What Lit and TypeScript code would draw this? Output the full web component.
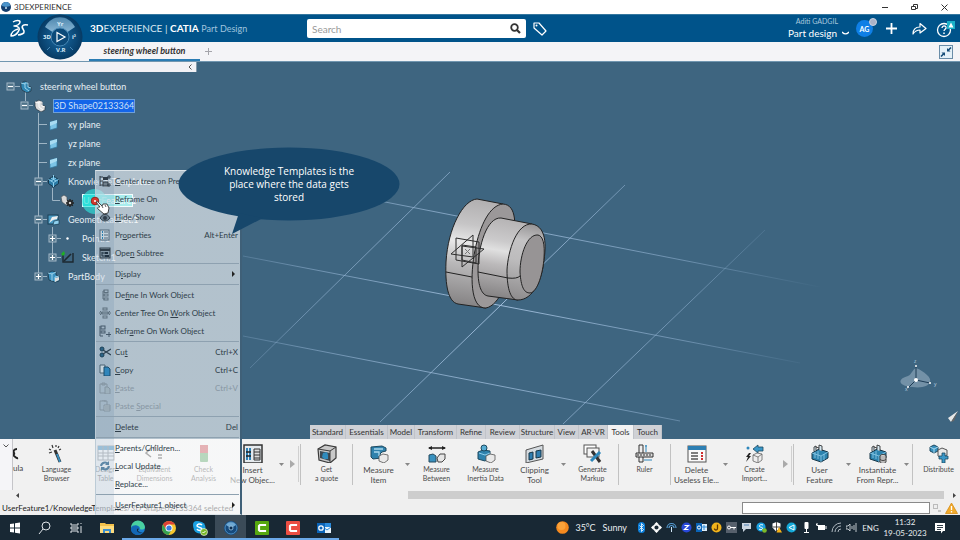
import { LitElement, html, svg, css, nothing, TemplateResult } from "lit";
import { customElement } from "lit/decorators.js";
import { classMap } from "lit/directives/class-map.js";

type Art = TemplateResult;
const icon = (w: number, h: number, art: unknown) =>
  html`<svg width=${w} height=${h} viewBox="0 0 ${w} ${h}" aria-hidden="true">${art}</svg>`;

/* ---------- model tree ---------- */
const partArt = (a: string, b: string) => svg`<path d="M2 3l4-2 3 2v3l3 1v4l-4 2-5-3-1-3z" fill=${a} stroke="#25343f" stroke-width=".7"/><path d="M6 3l3 0v4l3 1M6 3v5l4 3M2 3l4 1" fill="none" stroke=${b} stroke-width=".9"/>`;
const planeArt = svg`<path d="M3 4l7-2v8l-7 2z" fill="#7cc4e6" stroke="#32789d" stroke-width=".7"/><path d="M3 4l7-2v3l-7 3z" fill="#a9dcf2"/>`;
const treeArt: Record<string, Art> = {
  product: partArt("#2f86b3", "#a7dcf3"),
  shape: partArt("#dcdcdc", "#fff"),
  plane: planeArt,
  know: svg`<path d="M6.500 1l5 3.500v4l-5 3.500-5-3.500v-4z" fill="#2b7ba6" stroke="#15354a"/><path d="M1.500 4.500l5 3 5-3M6.500 7.500v4.500M4 3l5 3M9 3l-5 3M6.500 0v4" stroke="#8fd0ee" fill="none"/>`,
  feature: svg`<path d="M0 3l3-2 3 2v3l2 1v3l-3 1-4-3z" fill="#d8d8d8" stroke="#46525a" stroke-width=".7"/><path d="M9 5v8M5 9h8M6.200 6.200l5.600 5.600M11.800 6.200l-5.600 5.600" stroke="#222" stroke-width="1.400"/><circle cx="9" cy="9" r="2" fill="#c9c9c9" stroke="#222" stroke-width="1.400"/>`,
  geo: svg`<rect x="1" y="2" width="10" height="9" fill="#4b9bc4" stroke="#1a4056"/><path d="M2 10l3-6 6-1-1 3-4 1z" fill="#eee"/><path d="M6 12l1-4 5-1v4z" fill="#8fd0ee" stroke="#1a4056" stroke-width=".7"/>`,
  point: svg`<circle cx="6.500" cy="6.500" r="1.200" fill="#fff"/>`,
  sketch: svg`<path d="M2 2v9h10V2" fill="none" stroke="#1d2830" stroke-width="1.400"/><path d="M3 10l7-7" stroke="#1d2830" stroke-width="1.600"/><path d="M0 3l3-3 1 3-2 2z" fill="#1fb024"/>`,
  body: svg`<path d="M1 3l4-2 4 1v3l3 1v5l-4 1-6-2z" fill="#3b92c1" stroke="#18384b" stroke-width=".8"/><path d="M1 3l4 1 4-2M5 4v7M8 7l4-1M8 7v5" stroke="#b5e2f5" stroke-width=".8" fill="none"/><path d="M8 8l4-1v3l-4 2z" fill="#ddd"/>`,
};
const tree: [number, string, string, string, string?][] = [
  [0, "-", "product", "steering wheel button"],
  [1, "-", "shape", "3D Shape02133364", "renaming"],
  [2, "", "plane", "xy plane"],
  [2, "", "plane", "yz plane"],
  [2, "", "plane", "zx plane"],
  [2, "-", "know", "KnowledgeTemplates"],
  [3, "", "feature", "UserFeature1", "selected"],
  [2, "-", "geo", "Geometrical Set.1"],
  [3, "+", "point", "Point.1"],
  [3, "+", "sketch", "Sketch.1"],
  [2, "+", "body", "PartBody"],
];

/* ---------- context menu ---------- */
const ink = "#2f3d49";
const menuArt: Record<string, Art> = {
  center: svg`<path d="M1 1v10M1 2h3M1 6h3M1 10h3" stroke=${ink}/><rect x="4" y="2" width="5" height="3" fill=${ink}/><rect x="4" y="7" width="5" height="4" fill="#71808c" stroke=${ink}/><path d="M10 0v4M8 2h4M10 8v4M8 10h4" stroke=${ink}/>`,
  hide: svg`<path d="M1 7c3-5 7-5 10 0-3 4-7 4-10 0z" fill="#6c7f8e" stroke=${ink}/><circle cx="6" cy="7" r="2" fill=${ink}/>`,
  props: svg`<rect x="1" y="1" width="9" height="10" fill="#c3d2dc" stroke="#52697a"/><path d="M3 3h1M3 6h1M3 9h1" stroke="#2c7fae" stroke-width="2"/><path d="M5 3h4M5 6h4M5 9h4" stroke="#52697a"/>`,
  subtree: svg`<rect x="1" y="1" width="10" height="10" fill="#8296a5" stroke=${ink}/><path d="M1 3h10" stroke=${ink} stroke-width="2"/><path d="M3 5v4h4M3 6h3" stroke="#213242" fill="none"/><rect x="6" y="5" width="3" height="2" fill="#213242"/><rect x="6" y="8" width="4" height="2" fill="#213242"/>`,
  define: svg`<path d="M4 2v8M4 2h2M4 6h2M4 10h2" stroke="#5e717f"/><rect x="5" y="1" width="4" height="2.500" fill="none" stroke="#5e717f"/><rect x="5" y="5" width="4" height="2" fill="none" stroke="#5e717f"/><rect x="5" y="9" width="4" height="2" fill="none" stroke="#5e717f"/>`,
  centerwork: svg`<rect x="4" y="1" width="4" height="2" fill="none" stroke="#5e717f"/><rect x="3" y="5" width="6" height="2" fill="#8ba0af" stroke="#5e717f"/><rect x="4" y="9" width="4" height="2" fill="none" stroke="#5e717f"/><path d="M0 6h3M9 6h3M1 4l2 2-2 2M11 4l-2 2 2 2" stroke="#5e717f" fill="none"/>`,
  reframe: svg`<path d="M1 1v10M1 11h3" stroke="#44586a"/><rect x="2" y="1" width="4" height="3" fill="none" stroke="#44586a"/><rect x="2" y="6" width="4" height="2" fill="none" stroke="#44586a"/><path d="M10 7v5M7 9.500h5" stroke="#44586a"/>`,
  cut: svg`<circle cx="3" cy="3" r="2" fill="#2b6387" stroke="#1c4158"/><circle cx="3" cy="9" r="2" fill="#2b6387" stroke="#1c4158"/><path d="M4 4l8 5M4 8l8-5" stroke="#2e4252" stroke-width="1.400"/>`,
  copy: svg`<path d="M1 1h5v8H1z" fill="#c6d5de" stroke="#4d6475"/><path d="M5 3h4l2 2v7H5z" fill="#3186bb" stroke="#1d4d6c"/>`,
  paste: svg`<path d="M1 2h7v9H1zM3 1h3v2H3z" fill="none" stroke="#8495a2"/><path d="M6 5h3l2 2v5H6z" fill="#9db0bc" stroke="#8495a2"/>`,
  pastespecial: svg`<path d="M1 1h7v9H1zM3 0h3v2" fill="none" stroke="#8495a2"/><path d="M5 5h6v6H5zM6 7h5M6 9h5" fill="#b0c0ca" stroke="#8495a2"/>`,
  update: svg`<path d="M2 6a4 4 0 0 1 7-2M10 6a4 4 0 0 1-7 2" fill="none" stroke="#5d87a6" stroke-width="2"/><path d="M10 1v4H6zM2 11V7h4z" fill="#5d87a6"/>`,
};
/* icon, text before the mnemonic, mnemonic, text after it, shortcut, state */
type Item = [string, string, string, string, string?, string?];
const menu: Item[][] = [
  [
    ["center", "", "C", "enter tree on Pres"],
    ["", "", "R", "eframe On"],
    ["hide", "", "H", "ide/Show"],
    ["props", "Pr", "o", "perties", "Alt+Enter"],
    ["subtree", "Ope", "n", " Subtree"],
  ],
  [["", "D", "i", "splay", "", "sub"]],
  [
    ["define", "De", "f", "ine In Work Object"],
    ["centerwork", "Center Tree On ", "W", "ork Object"],
    ["reframe", "Refr", "a", "me On Work Object"],
  ],
  [
    ["cut", "Cu", "t", "", "Ctrl+X"],
    ["copy", "", "C", "opy", "Ctrl+C"],
    ["paste", "", "P", "aste", "Ctrl+V", "off"],
    ["pastespecial", "Paste ", "S", "pecial", "", "off"],
  ],
  [["", "", "D", "elete", "Del"]],
  [
    ["", "", "P", "arents/Children..."],
    ["update", "", "L", "ocal Update"],
    ["", "", "R", "eplace..."],
  ],
  [["", "", "U", "serFeature1 object", "", "sub"]],
];

/* ---------- action bar ---------- */
const cube = (x: number, y: number) => svg`<path d="M${x} ${y + 3}l4-2 5 1v5l-4 3-5-2z" fill="#e9e9e9" stroke="#555" stroke-width=".8"/>`;
const feat = svg`<path d="M2 9l7-4 9 3v6l-7 4-9-3z" fill="#2d83ae" stroke="#173648"/><path d="M2 9l9 3 7-4M11 12v6M5 8v6M8 7l0 8M14 10v6" stroke="#8fcdea" fill="none" stroke-width=".8"/><path d="M4 7V3l2-1v5M9 6V1l3 1v5M6 3l3 1" fill="#d7e8f0" stroke="#222" stroke-width=".8"/>`;
const barArt: Record<string, Art> = {
  formula: svg`<path d="M4 2c-3 0-4 2-3 4s-2 2-2 2c3 0 3 4 6 3" fill="none" stroke="#222" stroke-width="2"/>`,
  wand: svg`<path d="M8 6l5 12" stroke="#333" stroke-width="3"/><path d="M10 10l3 8" stroke="#3a8fc0" stroke-width="2"/><path d="M2 5l2 1M5 1l1 3M9 1v2M12 2l-1 2M2 9l3-1M12 6l2-1" stroke="#333" stroke-width="1.200"/>`,
  table: svg`<rect x="2" y="2" width="16" height="14" fill="#fff" stroke="#6f7377"/><rect x="2" y="2" width="16" height="4" fill="#287fb5"/><path d="M2 9h16M2 12h16M7 2v14M12 2v14" stroke="#6f7377"/>`,
  equal: svg`<path d="M6 4l-5 5 5 4M8 5l3-4M13 11h4M13 14h4" stroke="#333" stroke-width="1.500" fill="none"/>`,
  check: svg`<rect x="6" y="1" width="8" height="17" rx="1" fill="#4c9d59"/><rect x="6" y="1" width="8" height="8" fill="#c23b43"/>`,
  insert: svg`<rect x="1" y="1" width="18" height="18" fill="#e5eaee" stroke="#333" stroke-width="1.500"/><path d="M4 4v12M7 4v12" stroke="#2f82b5" stroke-width="2"/><path d="M3 8h5M3 12h5" stroke="#222" stroke-width="1.500"/><path d="M11 5h6v11h-6z" fill="#ddd" stroke="#333"/><path d="M11 8h6M11 11h6M11 14h6" stroke="#333"/>`,
  quote: svg`<path d="M1 5l7-4 11 2v11l-6 5L2 16z" fill="#c9c9c9" stroke="#3a3a3a" stroke-width="1.200"/><path d="M3 7l10 2v8L3 14z" fill="#3d4a54"/><path d="M1 5l12 2 6-4M13 7v12" fill="none" stroke="#3a3a3a"/><path d="M6 9l4-1 1 3v4l-4 0-2-2z" fill="#2f8bbd"/>`,
  mitem: svg`<path d="M2 3l11-1 4 2v3l-4 1-2 2 1 4-8 1-2-2z" fill="#2f82ad" stroke="#1d4960"/><path d="M5 5h9M5 8h5v4" stroke="#a9d8ed" fill="none" stroke-width="1.300"/>${cube(10, 9)}`,
  mbetween: svg`<path d="M2 4h16" stroke="#222" stroke-width="1.500"/><path d="M1 4l4-2v4zM19 4l-4-2v4z" fill="#222"/><path d="M2 11l4-1 3 2v6H2z" fill="#3991bf" stroke="#264b5f"/><path d="M10 14l3-4 5 0v5l-3 3h-4z" fill="#e6e6e6" stroke="#444"/>`,
  inertia: svg`<path d="M2 8l5-2 7 1v7l-5 3-7-2z" fill="#2f82ad" stroke="#1d4960"/><circle cx="8" cy="4" r="3" fill="#57add3" stroke="#1d4960"/><path d="M3 9l6 2 5-2" stroke="#8fcdea" fill="none"/>${cube(10, 9)}`,
  clip: svg`<path d="M1 6l17-5v14l-17 4z" fill="#d5dbe0" stroke="#555"/><path d="M4 9l4-1v7l-4 1zM11 7l5-1v7l-5 1z" fill="#2e7db0" stroke="#173648"/>`,
  markup: svg`<rect x="1" y="1" width="12" height="9" fill="#fff" stroke="#555"/><rect x="4" y="4" width="12" height="9" fill="#f4f4f4" stroke="#555"/><path d="M9 7l8 11" stroke="#333" stroke-width="3"/><path d="M17 8l-9 9" stroke="#2e87bb" stroke-width="3"/>`,
  ruler: svg`<path d="M4 1h4v17H4z" fill="#eee" stroke="#333"/><path d="M1 9h17v4H1z" fill="#ddd" stroke="#333"/><path d="M3 10v2M6 10v2M9 10v2M12 10v2M15 10v2" stroke="#333"/><path d="M11 1v7M10 2h2M9 16h8" stroke="#2e87bb"/>`,
  useless: svg`<rect x="1" y="2" width="18" height="16" fill="#fafafa" stroke="#555"/><rect x="1" y="2" width="18" height="4" fill="#2d7fb3"/><path d="M4 9h7M4 12h7M4 15h7" stroke="#555" stroke-width="1.400"/><path d="M14 8l2 2m0-2l-2 2M14 11l2 2m0-2l-2 2M14 14l2 2m0-2l-2 2" stroke="#cf2e2e"/>`,
  imp: svg`<circle cx="3" cy="4" r="1.500" fill="#2e87bb"/><path d="M8 5l5-4v2h5v4h-5v2z" fill="#3a97c8" stroke="#1d4960" stroke-width=".8"/><path d="M4 9l-3 4h2l-2 5 5-6H4l2-3z" fill="#222"/><path d="M8 11l4-2 5 1v6l-4 3-5-2zM8 11l5 2 4-3M13 13v6" fill="#eee" stroke="#666" stroke-width=".8"/>`,
  user: feat,
  inst: svg`${feat}<ellipse cx="15" cy="12" rx="3" ry="1.500" fill="#ddd" stroke="#444"/><path d="M12 12v6c1 2 5 2 6 0v-6M12 15c1 2 5 2 6 0" fill="#bbb" stroke="#444"/>`,
  distribute: svg`<path d="M1 3l4-2 4 2v4L5 9 1 7z" fill="#3991bf" stroke="#1d4960"/><path d="M1 3l4 2 4-2M5 5v4" stroke="#a9d8ed" fill="none"/><path d="M9 6l4-2 5 2v5l-5 3-4-2z" fill="#e8e8e8" stroke="#555"/><path d="M13 9h3v3h3v3h-3v4h-3v-4h-3v-3h3z" fill="#3a97c8" stroke="#1d4960" stroke-width=".8"/>`,
};
/* "|" draws a group rule, "v" a flyout arrow, ">" a group expander */
type Cmd = string | [string, string, string, boolean?];
const commands: Cmd[] = [
  ["wand", "Language", "Browser"],
  ["table", "Design", "Table"],
  ["equal", "Equivalent", "Dimensions"],
  ["check", "Check", "Analysis"],
  ["insert", "Insert", "New Objec...", true],
  "v", ">", "|",
  ["quote", "Get", "a quote"],
  "|",
  ["mitem", "Measure", "Item", true],
  "v",
  ["mbetween", "Measure", "Between"],
  ["inertia", "Measure", "Inertia Data"],
  ["clip", "Clipping", "Tool", true],
  "v",
  ["markup", "Generate", "Markup"],
  "|",
  ["ruler", "Ruler", ""],
  "|",
  ["useless", "Delete", "Useless Ele...", true],
  "v",
  ["imp", "Create", "Import..."],
  ">", "|",
  ["user", "User", "Feature", true],
  "v",
  ["inst", "Instantiate", "From Repr...", true],
  "v", "|",
  ["distribute", "Distribute", ""],
];
const sections = ["Standard", "Essentials", "Model", "Transform", "Refine", "Review", "Structure", "View", "AR-VR", "Tools", "Touch"];

/* ---------- desktop task bar ---------- */
const compassBall = svg`<circle cx="8" cy="8" r="7" fill="#164a7c"/><circle cx="8" cy="8" r="6" fill="none" stroke="#4b8cc0"/><path d="M3 5a6 6 0 0 1 10 0l-3 2H6z" fill="#6fa9d3"/><circle cx="8" cy="8" r="2" fill="#0d2d50" stroke="#9fcbe8" stroke-width=".8"/>`;
const camtasia = (c: string) => svg`<rect x="1" y="1" width="14" height="14" rx="1" fill=${c}/><path d="M11 6V5H6L5 6v4l1 1h5v-1" stroke="#fff" stroke-width="2.200" fill="none"/>`;
const apps: [string, boolean, Art][] = [
  ["Start", false, svg`<path d="M3 4l4-.6v4H3zM8 3.200L13 2.500v4.900H8zM3 8.500h4v4L3 12zM8 8.500h5v5L8 12.700z" fill="#fff"/>`],
  ["Search", false, svg`<circle cx="9" cy="6" r="4" fill="none" stroke="#dfe4e8"/><path d="M6 9l-4 5" stroke="#dfe4e8"/>`],
  ["Task view", false, svg`<path d="M3 3v2h7V3M3 13v-2h7v2M3 7h7v2H3zM13 3v1M13 6v7" stroke="#dfe4e8" fill="none"/>`],
  ["File Explorer", false, svg`<path d="M1 3h5l1 1h8v9H1z" fill="#f2c14b"/><path d="M1 6h14v7H1z" fill="#fddc7d"/><path d="M4 13V9h8v4h-2v-2H6v2z" fill="#3b8fd0"/>`],
  ["Edge", true, svg`<circle cx="8" cy="8" r="7" fill="#1b7fd0"/><path d="M1 8a7 7 0 0 1 14-1c0 3-4 3-5 2 1-3-5-5-9-1z" fill="#49d0a0"/><path d="M1 8c2-4 8-3 8 0-3 0-2 5 4 4-4 6-13 2-12-4z" fill="#1367b5"/><path d="M9 9c-2 1-1 4 4 3-2 1-6 1-6-2 0-1 1-2 2-1z" fill="#16202b"/>`],
  ["Chrome", true, svg`<circle cx="8" cy="8" r="7" fill="#f6c62e"/><path d="M2 4.500a7 7 0 0 1 12 0H8L5 9.500z" fill="#dd4236"/><path d="M2 4.500a7 7 0 0 0 5.500 10.500L10.500 10 5 9.500z" fill="#35a253"/><circle cx="8" cy="8" r="3.500" fill="#fff"/><circle cx="8" cy="8" r="2.600" fill="#3b7de0"/>`],
  ["Skype", true, svg`<circle cx="5" cy="5" r="4" fill="#1ba1e2"/><circle cx="7.500" cy="7.500" r="6" fill="#1ba1e2"/><path d="M10 5C8 3 5 4 5 6c1 2 5 1 5 3 0 2-4 2-5 0" stroke="#fff" stroke-width="1.500" fill="none"/><circle cx="12" cy="12" r="3.500" fill="#7bb929" stroke="#fff" stroke-width=".6"/><path d="M10.500 12l1 1 2-2" stroke="#fff" fill="none"/>`],
  ["3DEXPERIENCE", true, compassBall],
  ["Camtasia", true, camtasia("#57a80f")],
  ["Camtasia Recorder", true, camtasia("#ec4e43")],
  ["Outlook", true, svg`<rect x="6" y="3" width="9" height="10" fill="#2b8bdb"/><path d="M7 7h8v6H7z" fill="#e8f3fb"/><path d="M7 7l4 3 4-3" stroke="#2b8bdb" fill="none"/><rect x="1" y="3" width="8" height="10" fill="#0a64b8"/><circle cx="5" cy="8" r="2.200" fill="none" stroke="#fff" stroke-width="1.300"/>`],
];
const tray: Art[] = [
  svg`<rect x="2" y="0" width="7" height="11" rx="3.500" fill="#0d80dc"/><path d="M3.500 3.500l4 4-2 2v-8l2 2-4 4" stroke="#fff" stroke-width=".8" fill="none"/>`,
  svg`<path d="M5.500 0l2.500 2.500h-5zM5.500 11l2.500-2.500h-5zM0 5.500l2.500-2.500v5zM11 5.500l-2.500-2.500v5z" fill="#fff"/><circle cx="5.500" cy="5.500" r="2.800" fill="none" stroke="#fff" stroke-width="1.400"/>`,
  svg`<path d="M1 6a4.500 4.500 0 0 1 9 0M3 6a2.500 2.500 0 0 1 5 0" fill="none" stroke="#559bd1" stroke-width="1.200"/><path d="M5.500 5v5" stroke="#cfe6f7"/>`,
  svg`<circle cx="5.500" cy="5.500" r="5" fill="#2848d8"/><path d="M3.500 3.500h4l-4 4h4" stroke="#fff" stroke-width="1.200" fill="none"/>`,
  svg`<rect x="0" y="1" width="6" height="9" fill="#0a64b8"/><rect x="6" y="2" width="5" height="7" fill="#dcecf8"/><circle cx="3" cy="5.500" r="1.600" fill="none" stroke="#fff"/><path d="M6 5h5M8 3v5" stroke="#2b8bdb"/>`,
  svg`<circle cx="5.500" cy="5.500" r="5" fill="#f2b41c"/><path d="M6.500 2.500v4c0 2-3 2-3 0" stroke="#5d3700" stroke-width="1.300" fill="none"/>`,
  svg`<rect width="11" height="11" fill="#56606c"/><circle cx="3" cy="5.500" r="1.500" fill="none" stroke="#fff"/><path d="M4 5.500h6M8 5.500v2" stroke="#fff"/>`,
  svg`<path d="M1 1h9v6H5l-3 3V7H1z" fill="#c9d4df"/><path d="M3 3h5" stroke="#4c7fb0"/>`,
  svg`<circle cx="5" cy="5" r="4.600" fill="#1ba1e2"/><path d="M7 3C5 2 3 3 3.500 4.500 4 5.500 7 5 6.500 6.500S4 8 3 7" stroke="#fff" fill="none"/><circle cx="8.500" cy="8.500" r="2.300" fill="#7bb929"/>`,
  svg`<path d="M5.500 0l4 1.500v4L5.500 10l-4-4.500v-4z" fill="#fff"/><path d="M5.500 0v5h-4M5.500 5h4L5.500 10z" stroke="#222" fill="none" stroke-width=".8"/><path d="M8 5l3 5.500H5.500z" fill="#f7b317"/>`,
  svg`<circle cx="5.500" cy="5.500" r="5" fill="#13a8d8"/><path d="M8 3L3 5.500 8 8z" stroke="#fff" fill="none"/>`,
  svg`<rect x="3.500" y="0" width="4" height="7" rx="1" fill="#fff"/><path d="M5.500 7v3M3 10.500h5" stroke="#fff"/>`,
  svg`<path d="M2 3h7v5H2z" fill="#fff"/><path d="M10 4v3M0 2l3 3M1 1v3" stroke="#fff"/>`,
  svg`<path d="M1 10a9 9 0 0 1 9-9M4 10a6 6 0 0 1 6-6M7 10a3 3 0 0 1 3-3" stroke="#aeb8c0" fill="none"/>`,
  svg`<path d="M0 4h2l2-2v7L2 7H0zM6 4v3M8 3v5M10 1v9" stroke="#cfd6db" fill="none" stroke-width=".9"/>`,
];

@customElement("app-root")
export class AppRoot extends LitElement {
  static styles = css`
    :host {
      display: flex; flex-direction: column; min-height: 100vh; position: relative; overflow: hidden;
      font-family: Lato, "Open Sans", "Noto Sans", sans-serif; font-size: 8px; line-height: 10px; color: #444; background: #3e6580;
    }
    * { box-sizing: border-box; }
    svg { display: block; flex: none; }
    button, input { font: inherit; color: inherit; border: 0; padding: 0; margin: 0; background: none; }
    button { cursor: pointer; display: flex; align-items: center; justify-content: center; }
    ul { list-style: none; margin: 0; padding: 0; }
    h1 { margin: 0; font-weight: 400; }

    .titlebar { display: flex; align-items: center; height: 14px; background: #fff; color: #333; padding: 0 9px 0 1px; }
    .titlebar .name { margin-left: 3px; flex: 1; }
    .win { width: 29px; height: 14px; }
    .win:last-child { width: 14px; margin-left: 8px; }

    .header { display: flex; align-items: center; height: 28px; background: #00538a; border-top: 1px solid #35779f; color: #fff; padding: 0 1px 0 8px; }
    .brand { margin-left: 59px; font-size: 10px; line-height: 14px; width: 217px; color: #d8e7f1; white-space: nowrap; }
    .brand b { color: #fff; }
    .brand small { font-size: 9px; color: #9fc4de; }
    .search { display: flex; width: 219px; height: 19px; background: #fff; border-radius: 2px; align-items: center; }
    .search input { flex: 1; min-width: 0; padding-left: 5px; font-size: 10px; height: 19px; color: #555; outline: 0; }
    .search input::placeholder { color: #9a9a9a; }
    .search button { width: 22px; height: 19px; }
    .tag { width: 26px; height: 20px; margin-left: 1px; }
    .spacer { flex: 1; }
    .who { display: flex; flex-direction: column; align-items: flex-end; margin-right: 7px; }
    .who .user { font-size: 7px; line-height: 9px; color: #a9c8dd; margin-right: 11px; }
    .who button { font-size: 10px; line-height: 14px; gap: 5px; }
    .avatar { position: relative; width: 17px; height: 17px; border-radius: 50%; background: #0f7fe6; font-size: 7px; font-weight: 700; color: #fff; margin-right: 4px; }
    .dot { position: absolute; right: -4px; top: -2px; width: 8px; height: 8px; border-radius: 50%; background: #a9b2c8; border: 1px solid #c9d2e0; }
    .tool { width: 28px; height: 22px; }
    .tool.wide { width: 26px; }
    .compass { position: absolute; left: 37px; top: 14px; }
    .compass text { font: 700 6px "Open Sans", sans-serif; fill: #d9ecf8; }

    .tabs { display: flex; align-items: center; height: 20px; background: #f4f4f7; border-bottom: 1px solid #7196b0; padding: 0 7px 0 89px; }
    .tabs .current { width: 111px; height: 19px; border-bottom: 2px solid #2b7cb3; font-weight: 700; font-style: italic; font-size: 9px; color: #333; }
    .tabs .add { width: 16px; height: 19px; }
    .collapse { width: 14px; height: 14px; border: 1px solid #6a8da8; background: #e5f1f8; }

    .view { position: relative; flex: 1; min-height: 377px; display: flex; flex-direction: column; }
    .scene { position: absolute; inset: 0; width: 100%; height: 100%; }
    .scene text { font: 5px "Open Sans", sans-serif; fill: #b9cfe0; }
    .panelbar { position: relative; display: flex; align-items: center; justify-content: flex-end; width: 197px; height: 10px; background: #f1f1f5; border-right: 1px solid #8298a8; }
    .panelbar button { width: 13px; height: 10px; }
    .tree { position: relative; margin-top: 5px; width: 197px; font-size: 9px; color: #e6eef3; }
    .lines { position: absolute; left: 0; top: 0; }
    .node { position: relative; display: flex; align-items: center; height: 19px; }
    .d0 { padding-left: 6px; } .d1 { padding-left: 20px; } .d2 { padding-left: 34px; } .d3 { padding-left: 48px; }
    .fold { width: 9px; height: 9px; flex: none; }
    .node .art { width: 13px; margin: 0 8px 0 4px; }
    .node .label { height: 12px; line-height: 12px; white-space: nowrap; }
    .renaming .label { background: #1465e8; outline: 1px solid #6fa0d8; color: #cfe0f5; }
    .selected .label { background: #22d6d6; border: 1px solid #e9ffff; height: 13px; line-height: 11px; width: 51px; }
    .sections { position: relative; margin: auto auto 0; display: grid; grid-template-columns: 36px 42px 27px 42px 29px 34px 35px 24px 29px 26px 28px; left: 6px; }
    .sections button { height: 14px; background: #cfd1d6; color: #333; border-right: 1px solid #c0c3c9; white-space: nowrap; }
    .sections .on { background: #f2f2f3; }

    .bar { display: flex; height: 51px; background: #f1f1f1; overflow: hidden; }
    .edge { width: 13px; border-right: 1px solid #c5c5c9; flex: none; align-items: flex-start; padding-top: 5px; background: #f5f5f8; }
    .cut { width: 19px; flex: none; padding-top: 8px; }
    .cut span { display: block; line-height: 9px; margin-top: 1px; }
    .cmd { flex: none; width: 49px; height: 51px; flex-direction: column; justify-content: flex-start; padding-top: 5px; color: #4a4a4a; font-size: 7px; line-height: 9px; white-space: nowrap; }
    .cmd svg { margin-bottom: 2px; }
    .cmd.big { font-size: 8px; line-height: 10px; }
    .fly { flex: none; width: 9px; }
    .more { flex: none; width: 13px; border-right: 1px solid #d0d0d0; margin: 7px 0 8px; }
    .rule { flex: none; width: 1px; background: #c2c2c2; margin: 5px 1px; }
    .scroll { display: flex; align-items: center; justify-content: flex-end; height: 10px; background: #f0f0f0; padding: 0 4px 0 16px; gap: 9px; }
    .track { width: 57%; height: 8px; background: #cdcdcd; }
    .status { display: flex; align-items: center; height: 15px; background: #efefef; color: #222; padding: 0 2px; }
    .status span { flex: 1; white-space: nowrap; }
    .status input { width: 188px; height: 12px; background: #fff; border: 1px solid #8a8a8a; font-size: 8px; }
    .status button { width: 14px; height: 14px; }

    .taskbar { display: flex; align-items: stretch; height: 25px; background: #182834; color: #e9edf0; }
    .app { width: 31px; border-bottom: 2px solid transparent; padding-top: 2px; }
    .app:first-child { width: 29px; }
    .open { border-bottom-color: #6ba9e8; }
    .front { background: #3b4b58; }
    .weather { display: flex; align-items: center; gap: 6px; font-size: 9px; }
    .weather b { font-weight: 400; margin-right: 1px; }
    .tray { display: flex; align-items: center; margin-left: 7px; }
    .tray button { width: 15px; height: 25px; }
    .lang { display: flex; align-items: center; width: 23px; justify-content: center; }
    .clock { display: flex; flex-direction: column; align-items: center; justify-content: center; width: 46px; line-height: 11px; white-space: nowrap; }
    .notes { width: 24px; margin-right: 8px; }

    .halo { position: absolute; left: 82px; top: 189px; width: 25px; height: 25px; border-radius: 50%; background: #2fe3dc; opacity: .65; }
    .menu { position: absolute; left: 95px; top: 170px; width: 147px; padding: 1px 1px 0 0; border: 1px solid #dde5ea; border-right: 2px solid #3f6078; border-left-color: #bccbd6;
      background: linear-gradient(90deg, rgb(214 224 234 / .66) 18px, rgb(250 251 252 / .62) 18px); color: #2f3e4a; }
    .group + .group { border-top: 1px solid #8ea1b0; margin-top: 1px; padding-top: 1px; }
    .item { width: 100%; height: 18px; justify-content: flex-start; text-align: left; white-space: nowrap; padding-right: 1px; }
    .item .art { width: 12px; margin: 0 4px 0 3px; }
    .item .text { flex: 1; }
    .item .key { margin-left: auto; }
    .off { color: #8796a3; }
    .callout { position: absolute; left: 178px; top: 147px; width: 222px; height: 88px; }
    .callout svg { position: absolute; left: 0; top: 0; }
    .callout p { position: relative; margin: 18px auto 0; width: 140px; text-align: center; font: 10px/13px "Open Sans", "Noto Sans", sans-serif; color: #fff; }
    .pointer { position: absolute; left: 88px; top: 194px; }
  `;

  private scene() {
    return html`<svg class="scene" viewBox="0 62 960 377" preserveAspectRatio="xMidYMid slice" aria-hidden="true">
      <defs>
        <linearGradient id="rim" gradientUnits="userSpaceOnUse" x1="478" y1="198" x2="462" y2="306"><stop offset="0" stop-color="#b0aeaf"/><stop offset=".25" stop-color="#c6c5c6"/><stop offset=".42" stop-color="#e8e8e8"/><stop offset=".62" stop-color="#b9b8b9"/><stop offset="1" stop-color="#848283"/></linearGradient>
        <linearGradient id="hub" gradientUnits="userSpaceOnUse" x1="512" y1="218" x2="498" y2="298"><stop offset="0" stop-color="#b4b2b3"/><stop offset=".3" stop-color="#cbcacb"/><stop offset=".42" stop-color="#e0e0e0"/><stop offset=".6" stop-color="#bbb9ba"/><stop offset="1" stop-color="#858384"/></linearGradient>
        <linearGradient id="dome" gradientUnits="userSpaceOnUse" x1="535" y1="222" x2="518" y2="301"><stop offset="0" stop-color="#8f8d8e"/><stop offset=".25" stop-color="#c4c3c4"/><stop offset=".5" stop-color="#bdbcbd"/><stop offset="1" stop-color="#8d8b8c"/></linearGradient>
        <radialGradient id="fade" gradientUnits="userSpaceOnUse" cx="495" cy="305" r="330"><stop offset="0" stop-color="#a9c6e4" stop-opacity=".9"/><stop offset=".6" stop-color="#8fb0d0" stop-opacity=".55"/><stop offset="1" stop-color="#7fa3c4" stop-opacity="0"/></radialGradient>
      </defs>
      <path d="M380 201L820 287M243 256L800 363M243 336L680 421M450 172L250 368M625 185L380 422M765 230L563 424" stroke="url(#fade)" fill="none"/>
      <path d="M477 199C463 200 448 228 446 262C445 285 448 302 458 304L486 308L503 204z" fill="url(#rim)" stroke="#222"/>
      <path d="M503 204C517 205 516 225 513 250C509 280 500 305 486 308C470 309 470 275 475 250C480 225 490 205 503 204z" fill="#9b9899" stroke="#222"/>
      <path d="M501 218C487 217 478 246 478 270C478 287 482 295 488 296L518 300L532 224z" fill="url(#hub)" stroke="#222"/>
      <path d="M532 224C517 223 508 250 507 270C507 290 511 300 518 300C533 300 542 280 544 260C547 240 544 226 532 224z" fill="url(#dome)" stroke="#222"/>
      <path d="M538 235C527 234 520 255 520 272C521 287 524 293 530 293C538 292 543 272 544 258C545 244 543 236 538 235z" fill="#979495" stroke="#222"/>
      <path d="M446 272L472 277M478 272L508 278Q517 279 520 276" fill="none" stroke="#222"/>
      <path d="M456 238l23 4v22l-23-4zM462 245l14 2v16l-14-3zM451 254l22-19v22zM462 267l22-18-22-3z" fill="none" stroke="#2d2d2d"/><path d="M465 249l5 5m0-5l-5 5" stroke="#777"/>
      <path d="M916 368C924 371 932 378 930 382C928 387 920 389 906 386C897 383 900 378 908 376C912 374 912 370 916 368z" fill="#b3c8d8" opacity=".45"/>
      <path d="M916 380V365M916 380l14 3M916 380l-8 8" stroke="#1e3c55"/><circle cx="916" cy="380" r="2" fill="#fff"/><circle cx="916" cy="366" r="1" fill="#fff"/><circle cx="930" cy="383" r="1" fill="#fff"/><circle cx="908" cy="387" r="1" fill="#fff"/>
      <text x="914" y="363">z</text><text x="934" y="386">y</text><text x="905" y="391">x</text>
      <path d="M958 411l-10 7 3 4z" fill="#e8e8e8"/><path d="M958 411l-4 10-3 1z" fill="#666"/>
    </svg>`;
  }

  private treeView() {
    return html`<ul class="tree">
      <svg class="lines" width="90" height="210" viewBox="0 0 90 210" aria-hidden="true"><path d="M15 9.500H20M25.500 14V24M29 28.500H33M38.500 36V200M38.500 47.500H47M38.500 66.500H47M38.500 85.500H47M43 104.500H47M52.500 111V123.500H60M43 142.500H47M52.500 150V180M57 161.500H61M57 180.500H61M43 199.500H47" stroke="#9db4c4" fill="none"/></svg>
      ${tree.map(([depth, sign, art, name, state]) => html`<li class="node d${depth} ${state ?? ""}">
        ${sign
          ? html`<button class="fold" aria-label=${sign === "-" ? "Collapse" : "Expand"}>${icon(9, 9, svg`<rect x="1" y="1" width="7" height="7" fill="#4f7389" stroke="#a3b8c6"/><path d=${sign === "-" ? "M2 4.500h5" : "M2 4.500h5M4.500 2v5"} stroke="#fff" stroke-width="1.200"/>`)}</button>`
          : html`<span class="fold"></span>`}
        <span class="art">${icon(13, 13, treeArt[art])}</span><span class="label">${name}</span>
      </li>`)}
    </ul>`;
  }

  private command(c: Cmd) {
    if (c === "|") return html`<span class="rule"></span>`;
    if (c === "v") return html`<button class="fly" aria-label="More">${icon(5, 3, svg`<path d="M0 0h5L2.500 3z" fill="#888"/>`)}</button>`;
    if (c === ">") return html`<button class="more" aria-label="Expand group">${icon(5, 8, svg`<path d="M0 0l5 4-5 4z" fill="#aaa"/>`)}</button>`;
    const [art, a, b, big] = c as [string, string, string, boolean?];
    return html`<button class=${classMap({ cmd: true, big: !!big })}>${icon(20, 19, barArt[art])}<span>${a}</span><span>${b}</span></button>`;
  }

  private menuItem([art, a, key, b, shortcut, state]: Item) {
    return html`<button class="item ${state === "off" ? "off" : ""}" ?disabled=${state === "off"} role="menuitem">
      <span class="art">${art ? icon(12, 12, menuArt[art]) : nothing}</span>
      <span class="text">${a}<u>${key}</u>${b}</span>
      ${state === "sub" ? icon(6, 6, svg`<path d="M0 0l3 3-3 3z" fill="#222"/>`) : html`<span class="key">${shortcut}</span>`}
    </button>`;
  }

  render() {
    return html`
      <div class="titlebar">
        ${icon(10, 10, svg`<circle cx="5" cy="5" r="5" fill="#153f6e"/><path d="M1 4a4 4 0 0 1 8 0L5 5z" fill="#4c94ca"/><circle cx="5" cy="6" r="1" fill="#cde4f4"/>`)}
        <span class="name">3DEXPERIENCE</span>
        <button class="win" aria-label="Minimize">${icon(7, 7, svg`<path d="M0 3.500h6" stroke="#333"/>`)}</button>
        <button class="win" aria-label="Restore">${icon(7, 7, svg`<path d="M.5 2.500h4v3h-4zM2.500 2V.5h4v4H5" fill="none" stroke="#333"/>`)}</button>
        <button class="win" aria-label="Close">${icon(7, 7, svg`<path d="M.5 .5l6 6m0-6l-6 6" stroke="#333"/>`)}</button>
      </div>
      <header class="header">
        ${icon(23, 20, svg`<path d="M5 3c3-2 7-2 7 0 0 2-3 4-6 4 4 0 7 2 4 6-2 3-5 4-7 4 0-3 3-6 7-7" fill="none" stroke="#fff" stroke-width="1.500" stroke-linejoin="round"/><path d="M20 6c-5-1-7 1-5 4s2 5-5 6" fill="none" stroke="#fff" stroke-width="1.600"/>`)}
        <h1 class="brand"><b>3D</b>EXPERIENCE | <b>CATIA</b> <small>Part Design</small></h1>
        <form class="search"><input type="search" aria-label="Search" placeholder="Search" /><button type="button" aria-label="Search">${icon(11, 11, svg`<circle cx="4.500" cy="4.500" r="3.300" fill="none" stroke="#333" stroke-width="1.800"/><path d="M7 7l3 3" stroke="#333" stroke-width="2.200"/>`)}</button></form>
        <button class="tag" aria-label="Tags">${icon(16, 16, svg`<path d="M2 2l5 0 7 8-4 4-8-7z" fill="none" stroke="#fff" stroke-width="1.200" stroke-linejoin="round"/><circle cx="4.500" cy="4.500" r="1" fill="#fff"/>`)}</button>
        <span class="spacer"></span>
        <div class="who"><span class="user">Aditi GADGIL</span><button>Part design ${icon(7, 5, svg`<path d="M0 1c2 2.500 5 2.500 7 0" fill="none" stroke="#fff" stroke-width="1.400"/>`)}</button></div>
        <button class="avatar">AG<span class="dot"></span></button>
        <button class="tool" aria-label="Add">${icon(13, 13, svg`<path d="M6.500 1v11M1 6.500h11" stroke="#fff" stroke-width="1.800"/>`)}</button>
        <button class="tool" aria-label="Share">${icon(15, 13, svg`<path d="M1 12c0-5 3-7 7-7V1.500L14 6.500 8 11V8C5 8 3 9 1 12z" fill="none" stroke="#fff" stroke-width="1.200" stroke-linejoin="round"/>`)}</button>
        <button class="tool wide" aria-label="Help">${icon(20, 18, svg`<circle cx="8" cy="10" r="6.500" fill="none" stroke="#fff" stroke-width="1.300"/><path d="M6 8c0-3 4.500-2.500 4 0-.3 1.200-2 1.300-2 3" fill="none" stroke="#fff" stroke-width="1.300"/><path d="M8 12.500v1.500" stroke="#fff" stroke-width="1.500"/><rect x="11" y="1" width="8" height="8" fill="#1ab0c8"/><path d="M15 2.500l2.500 5h-5z" fill="#fff"/>`)}</button>
      </header>
      <nav class="tabs">
        <button class="current">steering wheel button</button>
        <button class="add" aria-label="New tab">${icon(7, 7, svg`<path d="M3.500 0v7M0 3.500h7" stroke="#a5a5ab"/>`)}</button>
        <span class="spacer"></span>
        <button class="collapse" aria-label="Exit full screen">${icon(12, 12, svg`<path d="M7 2v3.500h3.500zM5 10V6.500H1.500z" fill="#174d78"/><path d="M8 4.500l3-3M4 7.500l-3 3" stroke="#174d78" stroke-width="1.700"/>`)}</button>
      </nav>
      <svg class="compass" width="46" height="48" viewBox="0 0 46 48" aria-hidden="true">
        <defs><radialGradient id="ball" cx=".5" cy=".5" r=".5"><stop offset="0" stop-color="#1b6ba3"/><stop offset=".75" stop-color="#0b4775"/><stop offset="1" stop-color="#073a63"/></radialGradient>
        <linearGradient id="lit" x1="0" y1="0" x2="0" y2="1"><stop offset="0" stop-color="#4e87ae"/><stop offset="1" stop-color="#8cb9d7"/></linearGradient></defs>
        <circle cx="23" cy="23" r="22.500" fill="url(#ball)"/><path d="M8 13C15 0 31 0 38 13L29 19A8 8 0 0 0 17 19z" fill="url(#lit)"/>
        <circle cx="23" cy="23" r="9" fill="#0c4a79" stroke="#4788b5"/><path d="M20 18.500l8 4.500-8 4.500z" fill="none" stroke="#fff" stroke-width="1.200"/>
        <path d="M13 33l-3 3M33 33l3 3" stroke="#4788b5"/><text x="20" y="12">Yr</text><text x="6" y="25">3D</text><text x="35" y="25">i²</text><text x="19" y="38">V.R</text>
      </svg>
      <main class="view">
        ${this.scene()}
        <div class="panelbar"><button aria-label="Hide panel">${icon(4, 6, svg`<path d="M3.500 .5L1 3l2.500 2.500" fill="none" stroke="#555"/>`)}</button></div>
        ${this.treeView()}
        <div class="sections">${sections.map((s) => html`<button class=${classMap({ on: s === "Tools" })}>${s}</button>`)}</div>
      </main>
      <section class="bar">
        <button class="edge" aria-label="Collapse action bar">${icon(6, 4, svg`<path d="M.5 .5L3 3 5.500 .5" fill="none" stroke="#555"/>`)}</button>
        <div class="cut">${icon(8, 16, barArt.formula)}<span>ula</span></div>
        ${commands.map((c) => this.command(c))}
      </section>
      <div class="scroll">${icon(3, 5, svg`<path d="M3 0v5L0 2.500z" fill="#444"/>`)}<span class="spacer"></span><span class="track"></span>${icon(3, 5, svg`<path d="M0 0v5l3-2.500z" fill="#444"/>`)}</div>
      <footer class="status"><span>UserFeature1/KnowledgeTemplates/3D Shape02133364 selected</span>
        <input aria-label="Command" />
        <button aria-label="Options">${icon(8, 8, svg`<rect x=".5" y=".5" width="4" height="4" fill="#eee" stroke="#bbb"/><path d="M5 7h3" stroke="#999"/>`)}</button>
        <button aria-label="Warnings">${icon(13, 12, svg`<path d="M6.500 1L12.500 11.500H.5z" fill="#f2ab2c" stroke="#d58b13" stroke-width=".8"/><path d="M6.500 4v4M6.500 9v1.500" stroke="#fff" stroke-width="1.300"/>`)}</button>
      </footer>
      <footer class="taskbar">
        ${apps.map(([name, open, art]) => html`<button class=${classMap({ app: true, open, front: name === "3DEXPERIENCE" })} aria-label=${name}>${icon(16, 16, art)}</button>`)}
        <span class="spacer"></span>
        <div class="weather">${icon(13, 13, svg`<circle cx="6.500" cy="6.500" r="6.300" fill="#f58a1f"/><circle cx="5.500" cy="5" r="4" fill="#fba33a"/>`)}<b>35°C</b><span>Sunny</span></div>
        <div class="tray">${tray.map((t) => html`<button aria-label="Tray item">${icon(11, 11, t)}</button>`)}</div>
        <span class="lang">ENG</span>
        <div class="clock"><span>11:32</span><span>19-05-2023</span></div>
        <button class="notes" aria-label="Notifications">${icon(12, 12, svg`<path d="M1 1h10v8H9l-2 2.500V9H1z" fill="#fff"/><path d="M3 3.500h6M3 5.500h6M3 7.500h4" stroke="#182834" stroke-width=".9"/>`)}</button>
      </footer>
      <div class="halo"></div>
      <div class="menu" role="menu">${menu.map((g) => html`<div class="group">${g.map((i) => this.menuItem(i))}</div>`)}</div>
      <div class="callout">
        <svg width="222" height="88" viewBox="0 0 222 88" aria-hidden="true"><ellipse cx="111" cy="37" rx="110.500" ry="36.500" fill="#17476b"/><path d="M61 66l-7 21 31-16z" fill="#17476b"/></svg>
        <p>Knowledge Templates is the place where the data gets stored</p>
      </div>
      <svg class="pointer" width="24" height="24" viewBox="0 0 24 24" aria-hidden="true"><circle cx="7" cy="7" r="3.800" fill="#d8392c" stroke="#8d2a22"/><circle cx="7" cy="7" r="1" fill="#fff"/>
        <path d="M8 8c1-1 2 0 3 1l3 3 1-2 4 0 2 4-1 5-4 1-6-5c-1-1 0-2 1-2l1 0z" fill="#fff" stroke="#333" stroke-width=".9"/><path d="M14 12l1 2M17 11l1 2" stroke="#333" stroke-width=".8"/></svg>
    `;
  }
}
